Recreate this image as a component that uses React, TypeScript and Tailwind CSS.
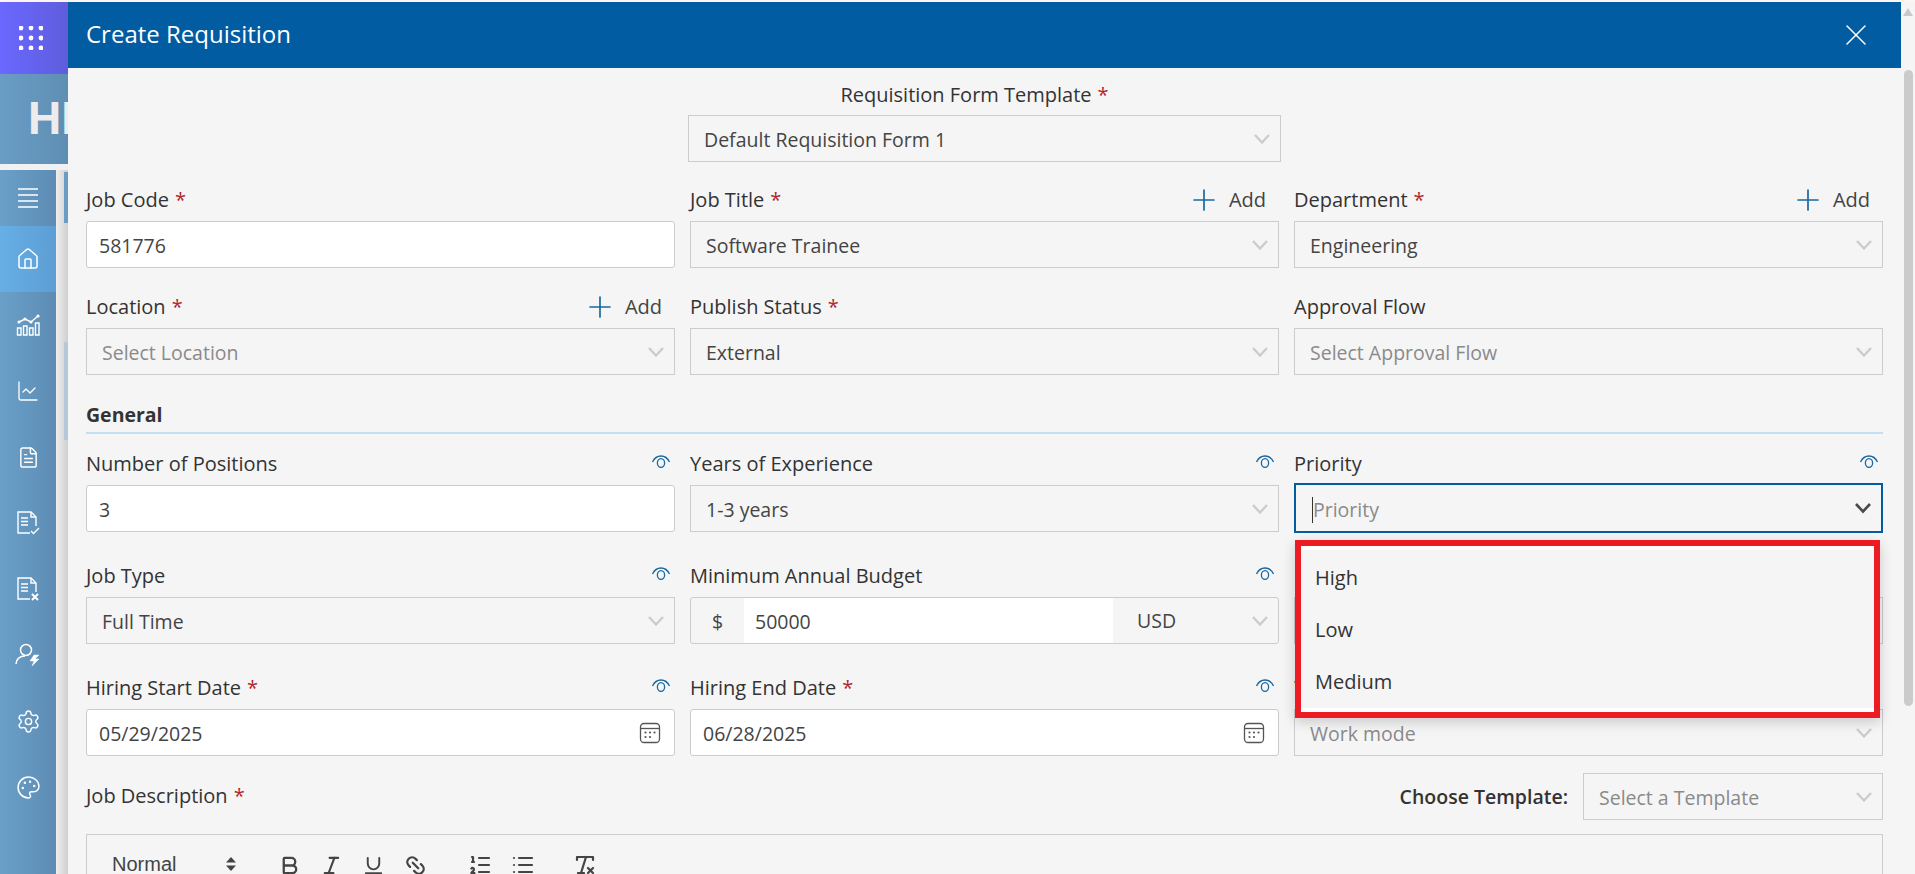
import type { ReactNode } from 'react';
import { Bold, House, Italic, Link2, List, ListOrdered, Plus, RemoveFormatting, Settings, Palette, Underline, X, FileText, ChartLine } from 'lucide-react';

const font = { fontFamily: '"Open Sans", "Noto Sans", sans-serif' };

function Chevron({ dark }: { dark?: boolean }) {
    return (
        <svg width="18" height="12" viewBox="0 0 18 12" fill="none" className="shrink-0">
            <path d="M2 2l7 7.500L16 2" stroke={dark ? '#4a4a4a' : '#cccccc'} strokeWidth={dark ? 2.6 : 2.4} />
        </svg>
    );
}

function Eye() {
    return (
        <svg width="20" height="16" viewBox="0 0 20 16" fill="none" stroke="#17689f" strokeWidth="1.3">
            <path d="M1.500 8C3.500 3.800 6.500 2 10 2s6.500 1.800 8.500 6" />
            <ellipse cx="10" cy="9" rx="3.600" ry="4.400" />
        </svg>
    );
}

function CalendarIcon() {
    return (
        <svg width="22" height="22" viewBox="0 0 22 22" fill="none" className="shrink-0">
            <rect x="1.500" y="1.500" width="19" height="19" rx="3.500" stroke="#555" strokeWidth="1.3" />
            <path d="M1.500 6.500h19" stroke="#555" strokeWidth="1.3" />
            <g fill="#555">
                <circle cx="6.500" cy="10.500" r="1.100" />
                <circle cx="11" cy="10.500" r="1.100" />
                <circle cx="15.500" cy="10.500" r="1.100" />
                <circle cx="6.500" cy="15" r="1.100" />
                <circle cx="11" cy="15" r="1.100" />
            </g>
        </svg>
    );
}

function Req() {
    return <span className="ml-[6px] text-[#b3262e]">*</span>;
}

function Label({ text, required, eye, add }: { text?: string; required?: boolean; eye?: boolean; add?: boolean }) {
    return (
        <div className="mb-2 flex h-[26px] items-center justify-between">
            <span className="-mt-[1px] text-[20px] font-medium text-[#333]">
                {text}
                {required && <Req />}
            </span>
            {eye && (
                <span className="-mt-[4px] pr-[4px]">
                    <Eye />
                </span>
            )}
            {add && (
                <span className="flex items-center gap-[8px] pr-[13px] text-[20px] text-[#444]">
                    <Plus size={34} strokeWidth={1.2} className="text-[#17689f]" />
                    Add
                </span>
            )}
        </div>
    );
}

function Select({ value, placeholder }: { value?: string; placeholder?: string }) {
    return (
        <div className="flex h-[47px] items-center justify-between border border-[#ccc] bg-[#f5f5f5] pl-[15px] pr-[9px] text-[19.500px]">
            <span className={`pt-[3px] ${value ? 'text-[#444]' : 'text-[#8a8a8a]'}`}>{value ?? placeholder}</span>
            <Chevron />
        </div>
    );
}

function Input({ value, icon }: { value: string; icon?: boolean }) {
    return (
        <div className="flex h-[47px] items-center justify-between rounded-[3px] border border-[#ccc] bg-white pl-[12px] pr-[13px] text-[19.500px] text-[#444]">
            <span className="pt-[3px]">{value}</span>
            {icon && <CalendarIcon />}
        </div>
    );
}

function Field({ label, children, ...rest }: { label?: string; required?: boolean; eye?: boolean; add?: boolean; children: ReactNode }) {
    return (
        <div>
            <Label text={label} {...rest} />
            {children}
        </div>
    );
}

function RailIcon({ children, active }: { children: ReactNode; active?: boolean }) {
    return (
        <div className={`flex h-[66px] items-center justify-center text-white ${active ? 'bg-gradient-to-r from-[#66afe6] to-[#5c9ed4]' : ''}`}>
            {children}
        </div>
    );
}

function Rail() {
    return (
        <div className="flex h-full w-[68px] shrink-0 flex-col bg-[#f1f1f1]">
            <div className="flex h-[72px] items-center justify-center bg-gradient-to-r from-[#6a68ff] to-[#5f5ddc] pr-[6px]">
                <svg width="24" height="24" viewBox="0 0 24 24" fill="white">
                    {[2, 12, 22].flatMap((y) =>
                        [2, 12, 22].map((x) => <circle key={`${x}-${y}`} cx={x} cy={y} r="2.400" />),
                    )}
                </svg>
            </div>
            <div className="h-[90px] overflow-hidden bg-gradient-to-r from-[#6a9dc5] to-[#5f8eb3] pl-[28px] pt-[14px] text-[46px] font-bold leading-[60px] text-[#ececec]" style={{ fontFamily: '"Liberation Sans", sans-serif' }}>
                HI
            </div>
            <div className="h-[6px]" />
            <div className="flex flex-1">
                <div className="w-[56px] bg-gradient-to-r from-[#6aa0c9] to-[#5d8cb4]">
                    <div className="flex h-[56px] items-center justify-center text-white">
                        <svg width="22" height="20" viewBox="0 0 22 20" stroke="white" strokeWidth="1.3" fill="none">
                            <path d="M1 1h20M1 7h20M1 13h20M1 19h20" />
                        </svg>
                    </div>
                    <RailIcon active>
                        <House size={24} strokeWidth={1.5} />
                    </RailIcon>
                    <RailIcon>
                        <svg width="24" height="24" viewBox="0 0 24 24" fill="none" stroke="white" strokeWidth="1.4">
                            <path d="M1.500 15h3.500v7H1.500zM7.500 13H11v9H7.500zM13.500 15H17v7h-3.500zM19.500 10H23v12h-3.500z" />
                            <path d="M3 9l6-3 6 3 7-6" />
                            <g fill="white" stroke="none">
                                <circle cx="3" cy="9" r="1.600" />
                                <circle cx="9" cy="6" r="1.600" />
                                <circle cx="15" cy="9" r="1.600" />
                                <circle cx="22" cy="3" r="1.600" />
                            </g>
                        </svg>
                    </RailIcon>
                    <RailIcon>
                        <ChartLine size={24} strokeWidth={1.3} />
                    </RailIcon>
                    <RailIcon>
                        <FileText size={23} strokeWidth={1.5} />
                    </RailIcon>
                    <RailIcon>
                        <svg width="24" height="24" viewBox="0 0 24 24" fill="none" stroke="white" strokeWidth="1.4">
                            <path d="M14 22H2V1h13l5 5v9" />
                            <path d="M15 1v5h5M5 7h7M5 10.500h7M5 14h7M15 20l2.500 2.500L23 17" />
                        </svg>
                    </RailIcon>
                    <RailIcon>
                        <svg width="24" height="24" viewBox="0 0 24 24" fill="none" stroke="white" strokeWidth="1.4">
                            <path d="M14 22H2V1h13l5 5v9" />
                            <path d="M15 1v5h5M5 7h7M5 10.500h7M5 14h7" />
                            <path d="M16 17l6 6M22 17l-6 6" strokeWidth="2" />
                        </svg>
                    </RailIcon>
                    <RailIcon>
                        <svg width="26" height="24" viewBox="0 0 26 24" fill="none" stroke="white" strokeWidth="1.5">
                            <circle cx="11" cy="7" r="5.500" />
                            <path d="M1 21c0-5 4-8 9-8" />
                            <path d="M24 12h-5l-4 6h4l-2 5 7-7h-4z" fill="white" strokeWidth="0.5" />
                        </svg>
                    </RailIcon>
                    <RailIcon>
                        <Settings size={25} strokeWidth={1.4} />
                    </RailIcon>
                    <RailIcon>
                        <Palette size={25} strokeWidth={1.4} />
                    </RailIcon>
                </div>
                <div className="flex-1 bg-gradient-to-r from-[#eeeeee] to-[#cfcfcf] pt-[2px]">
                    <div className="ml-auto h-[51px] w-[4px] bg-[#6b9cc4]" />
                    <div className="ml-auto mt-[119px] h-[98px] w-[4px] bg-[#b4c8da]" />
                </div>
            </div>
        </div>
    );
}

export default function App() {
    return (
        <div className="relative h-[874px] w-[1915px] overflow-hidden bg-[#fdf5f1] pt-[2px]" style={font}>
            <div className="flex h-full">
                <Rail />
                <div className="flex min-w-0 flex-1 flex-col">
                    <div className="flex h-[66px] shrink-0 items-center justify-between bg-[#015ca1] pl-[18px] pr-[27px] text-white">
                        <span className="-mt-[2px] text-[24px]">Create Requisition</span>
                        <X size={36} strokeWidth={1} />
                    </div>
                    <div className="min-h-0 flex-1 overflow-hidden bg-[#f5f5f5] px-[18px] pt-[14px]">
                        <div className="mx-auto w-[593px]">
                            <div className="mb-[7px] flex h-[26px] items-center justify-center pr-[20px] text-[20px] font-medium text-[#333]">
                                Requisition Form Template
                                <Req />
                            </div>
                            <Select value="Default Requisition Form 1" />
                        </div>

                        <div className="mt-[25px] grid grid-cols-3 gap-x-[15px] gap-y-[26px]">
                            <Field label="Job Code" required>
                                <Input value="581776" />
                            </Field>
                            <Field label="Job Title" required add>
                                <Select value="Software Trainee" />
                            </Field>
                            <Field label="Department" required add>
                                <Select value="Engineering" />
                            </Field>
                            <Field label="Location" required add>
                                <Select placeholder="Select Location" />
                            </Field>
                            <Field label="Publish Status" required>
                                <Select value="External" />
                            </Field>
                            <Field label="Approval Flow">
                                <Select placeholder="Select Approval Flow" />
                            </Field>
                        </div>

                        <div className="mt-[28px] h-[31px] border-b-2 border-[#c5dff2] text-[19.500px] font-bold leading-[23px] text-[#333]">
                            General
                        </div>

                        <div className="mt-[17px] grid grid-cols-3 gap-x-[15px] gap-y-[31px]">
                            <Field label="Number of Positions" eye>
                                <Input value="3" />
                            </Field>
                            <Field label="Years of Experience" eye>
                                <Select value="1-3 years" />
                            </Field>
                            <Field label="Priority" eye>
                                <div className="-mb-[1px] -mt-[2px] flex h-[50px] items-center justify-between border-2 border-[#015ca1] pl-[16px] pr-[9px] text-[19.500px] text-[#8a8a8a]">
                                    <span className="mt-[3px] border-l border-[#333] leading-[26px]">Priority</span>
                                    <Chevron dark />
                                </div>
                            </Field>
                            <Field label="Job Type" eye>
                                <Select value="Full Time" />
                            </Field>
                            <Field label="Minimum Annual Budget" eye>
                                <div className="flex h-[47px] items-center overflow-hidden rounded-[3px] border border-[#ccc] text-[19.500px] text-[#444]">
                                    <span className="flex w-[53px] justify-center pt-[3px]">$</span>
                                    <span className="flex h-full w-[369px] items-center bg-white pl-[11px] pt-[3px]">50000</span>
                                    <span className="flex flex-1 items-center justify-between pl-[24px] pr-[9px]">
                                        USD
                                        <Chevron />
                                    </span>
                                </div>
                            </Field>
                            <Field eye>
                                <Select />
                            </Field>
                            <Field label="Hiring Start Date" required eye>
                                <Input value="05/29/2025" icon />
                            </Field>
                            <Field label="Hiring End Date" required eye>
                                <Input value="06/28/2025" icon />
                            </Field>
                            <Field label="Work Mode" eye>
                                <Select placeholder="Work mode" />
                            </Field>
                        </div>

                        <div className="mt-[17px] flex items-center justify-between">
                            <span className="-mt-[2px] text-[20px] font-medium text-[#333]">
                                Job Description
                                <Req />
                            </span>
                            <div className="flex items-center gap-[15px]">
                                <span className="text-[19.500px] font-semibold text-[#333]">Choose Template:</span>
                                <div className="w-[300px]">
                                    <Select placeholder="Select a Template" />
                                </div>
                            </div>
                        </div>

                        <div className="mt-[14px] flex h-[60px] items-start border border-[#ccc] pl-[25px] pt-[16px] text-[#444]">
                            <span className="w-[113px] text-[20px] leading-[26px]" style={{ fontFamily: '"Liberation Sans", sans-serif' }}>
                                Normal
                            </span>
                            <svg width="12" height="16" viewBox="0 0 12 16" fill="#444" className="mt-[5px] shrink-0">
                                <path d="M6 1l5 5.500H1zM6 15l5-5.500H1z" />
                            </svg>
                            <div className="ml-[41px] flex items-center gap-[19px] pt-[2px]">
                                <Bold size={23} strokeWidth={2.4} />
                                <Italic size={23} strokeWidth={2.2} />
                                <Underline size={23} strokeWidth={2} />
                                <Link2 size={23} strokeWidth={2.4} className="rotate-45" />
                                <ListOrdered size={24} strokeWidth={2.2} className="ml-[22px]" />
                                <List size={24} strokeWidth={2.2} />
                                <RemoveFormatting size={24} strokeWidth={2.2} className="ml-[19px]" />
                            </div>
                        </div>
                    </div>
                </div>
                <div className="flex w-[14px] shrink-0 flex-col items-center bg-[#f5f5f5]">
                    <svg width="10" height="8" viewBox="0 0 10 8" fill="#c8c8c8" className="mt-[6px]">
                        <path d="M5 0l5 8H0z" />
                    </svg>
                    <div className="mt-[54px] h-[636px] w-[9px] rounded-full bg-[#cbcbcb]" />
                </div>
            </div>

            <div className="absolute left-[1295px] top-[540px] h-[178px] w-[585px] border-[6px] border-[#ed1c24] shadow-[0_4px_12px_rgba(0,0,0,0.18)]">
                <div className="flex h-full flex-col justify-center border-y-4 border-white bg-[#f5f5f5] pl-[14px] pt-[2px] text-[20px] text-[#333]">
                    <div className="flex h-[52px] items-center">High</div>
                    <div className="flex h-[52px] items-center">Low</div>
                    <div className="flex h-[52px] items-center">Medium</div>
                </div>
            </div>
        </div>
    );
}
